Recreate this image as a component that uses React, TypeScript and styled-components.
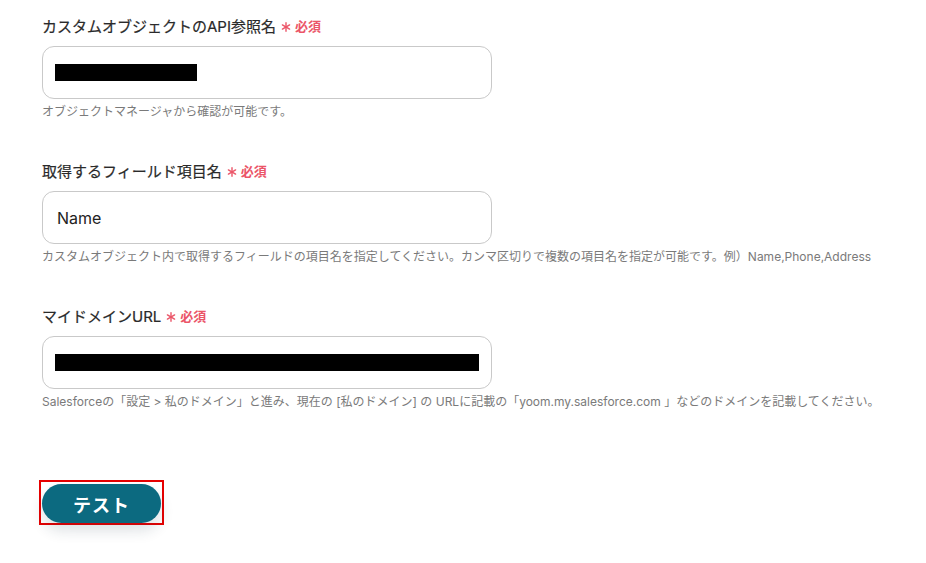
import styled, { createGlobalStyle } from 'styled-components';

const GlobalStyle = createGlobalStyle`
    html, body {
        margin: 0;
        padding: 0;
        background: #fff;
    }
    body {
        font-family: "Inter", "Noto Sans CJK JP", sans-serif;
        color: #333;
    }
`;

const Page = styled.div`
    width: 926px;
    height: 563px;
    box-sizing: border-box;
    padding: 14px 0 0 42px;
    display: flex;
    flex-direction: column;
`;

const Field = styled.div`
    display: flex;
    flex-direction: column;
    margin-bottom: 39px;
`;

const Label = styled.div`
    display: flex;
    align-items: center;
    gap: 5px;
    height: 22px;
    font-size: 15px;
    font-weight: 400;
    color: #2a2a2a;
    -webkit-text-stroke: 0.2px #2a2a2a;
`;

const Required = styled.span`
    display: inline-flex;
    align-items: center;
    gap: 4px;
    color: #eb5568;
    font-size: 13px;
    font-weight: 700;
    -webkit-text-stroke: 0;
`;

const StarIcon = styled.svg`
    width: 10px;
    height: 10px;
    margin-top: 3px;
`;

const InputBox = styled.div`
    margin-top: 10px;
    width: 450px;
    height: 53px;
    box-sizing: border-box;
    border: 1px solid #c9c9c9;
    border-radius: 12px;
    display: flex;
    align-items: center;
    padding: 0 12px;
    font-size: 16px;
    color: #222;
    -webkit-text-stroke: 0;
`;

const Value = styled.span`
    padding-left: 2px;
`;

const Redacted = styled.div<{ $w: number }>`
    width: ${({ $w }) => $w}px;
    height: 17px;
    background: #000;
`;

const Help = styled.div`
    margin-top: 4px;
    font-size: 12px;
    line-height: 17px;
    color: #7a7a7a;
    white-space: nowrap;
`;

const ButtonRow = styled.div`
    margin-top: 31px;
`;

const ButtonFrame = styled.div`
    display: inline-flex;
    margin-left: -3px;
    border: 2px solid #e60000;
    padding: 2px 1px 0 1px;
`;

const TestButton = styled.button`
    display: block;
    box-sizing: border-box;
    width: 119px;
    height: 39px;
    border: none;
    border-radius: 20px;
    background: #0c6a80;
    color: #fff;
    font-family: "Noto Sans CJK JP", sans-serif;
    font-size: 18px;
    font-weight: 700;
    letter-spacing: 1px;
    box-shadow: 0 8px 14px rgba(30, 50, 70, 0.14);
    cursor: pointer;
`;

function RequiredMark() {
    return (
        <Required>
            <StarIcon viewBox="0 0 10 10">
                <g stroke="#eb5568" strokeWidth="1.4" strokeLinecap="round">
                    <line x1="5" y1="0.8" x2="5" y2="9.2" />
                    <line x1="1.4" y1="2.9" x2="8.6" y2="7.1" />
                    <line x1="1.4" y1="7.1" x2="8.6" y2="2.9" />
                </g>
            </StarIcon>
            必須
        </Required>
    );
}

export default function App() {
    return (
        <>
            <GlobalStyle />
            <Page>
                <Field>
                    <Label>
                        カスタムオブジェクトのAPI参照名
                        <RequiredMark />
                    </Label>
                    <InputBox>
                        <Redacted $w={142} />
                    </InputBox>
                    <Help>オブジェクトマネージャから確認が可能です。</Help>
                </Field>
                <Field>
                    <Label>
                        取得するフィールド項目名
                        <RequiredMark />
                    </Label>
                    <InputBox>
                        <Value>Name</Value>
                    </InputBox>
                    <Help>
                        カスタムオブジェクト内で取得するフィールドの項目名を指定してください。カンマ区切りで複数の項目名を指定が可能です。例）Name,Phone,Address
                    </Help>
                </Field>
                <Field>
                    <Label>
                        マイドメインURL
                        <RequiredMark />
                    </Label>
                    <InputBox>
                        <Redacted $w={425} />
                    </InputBox>
                    <Help>
                        Salesforceの「設定 &gt; 私のドメイン」と進み、現在の [私のドメイン] の URLに記載の「yoom.my.salesforce.com 」などのドメインを記載してください。
                    </Help>
                </Field>
                <ButtonRow>
                    <ButtonFrame>
                        <TestButton>テスト</TestButton>
                    </ButtonFrame>
                </ButtonRow>
            </Page>
        </>
    );
}
